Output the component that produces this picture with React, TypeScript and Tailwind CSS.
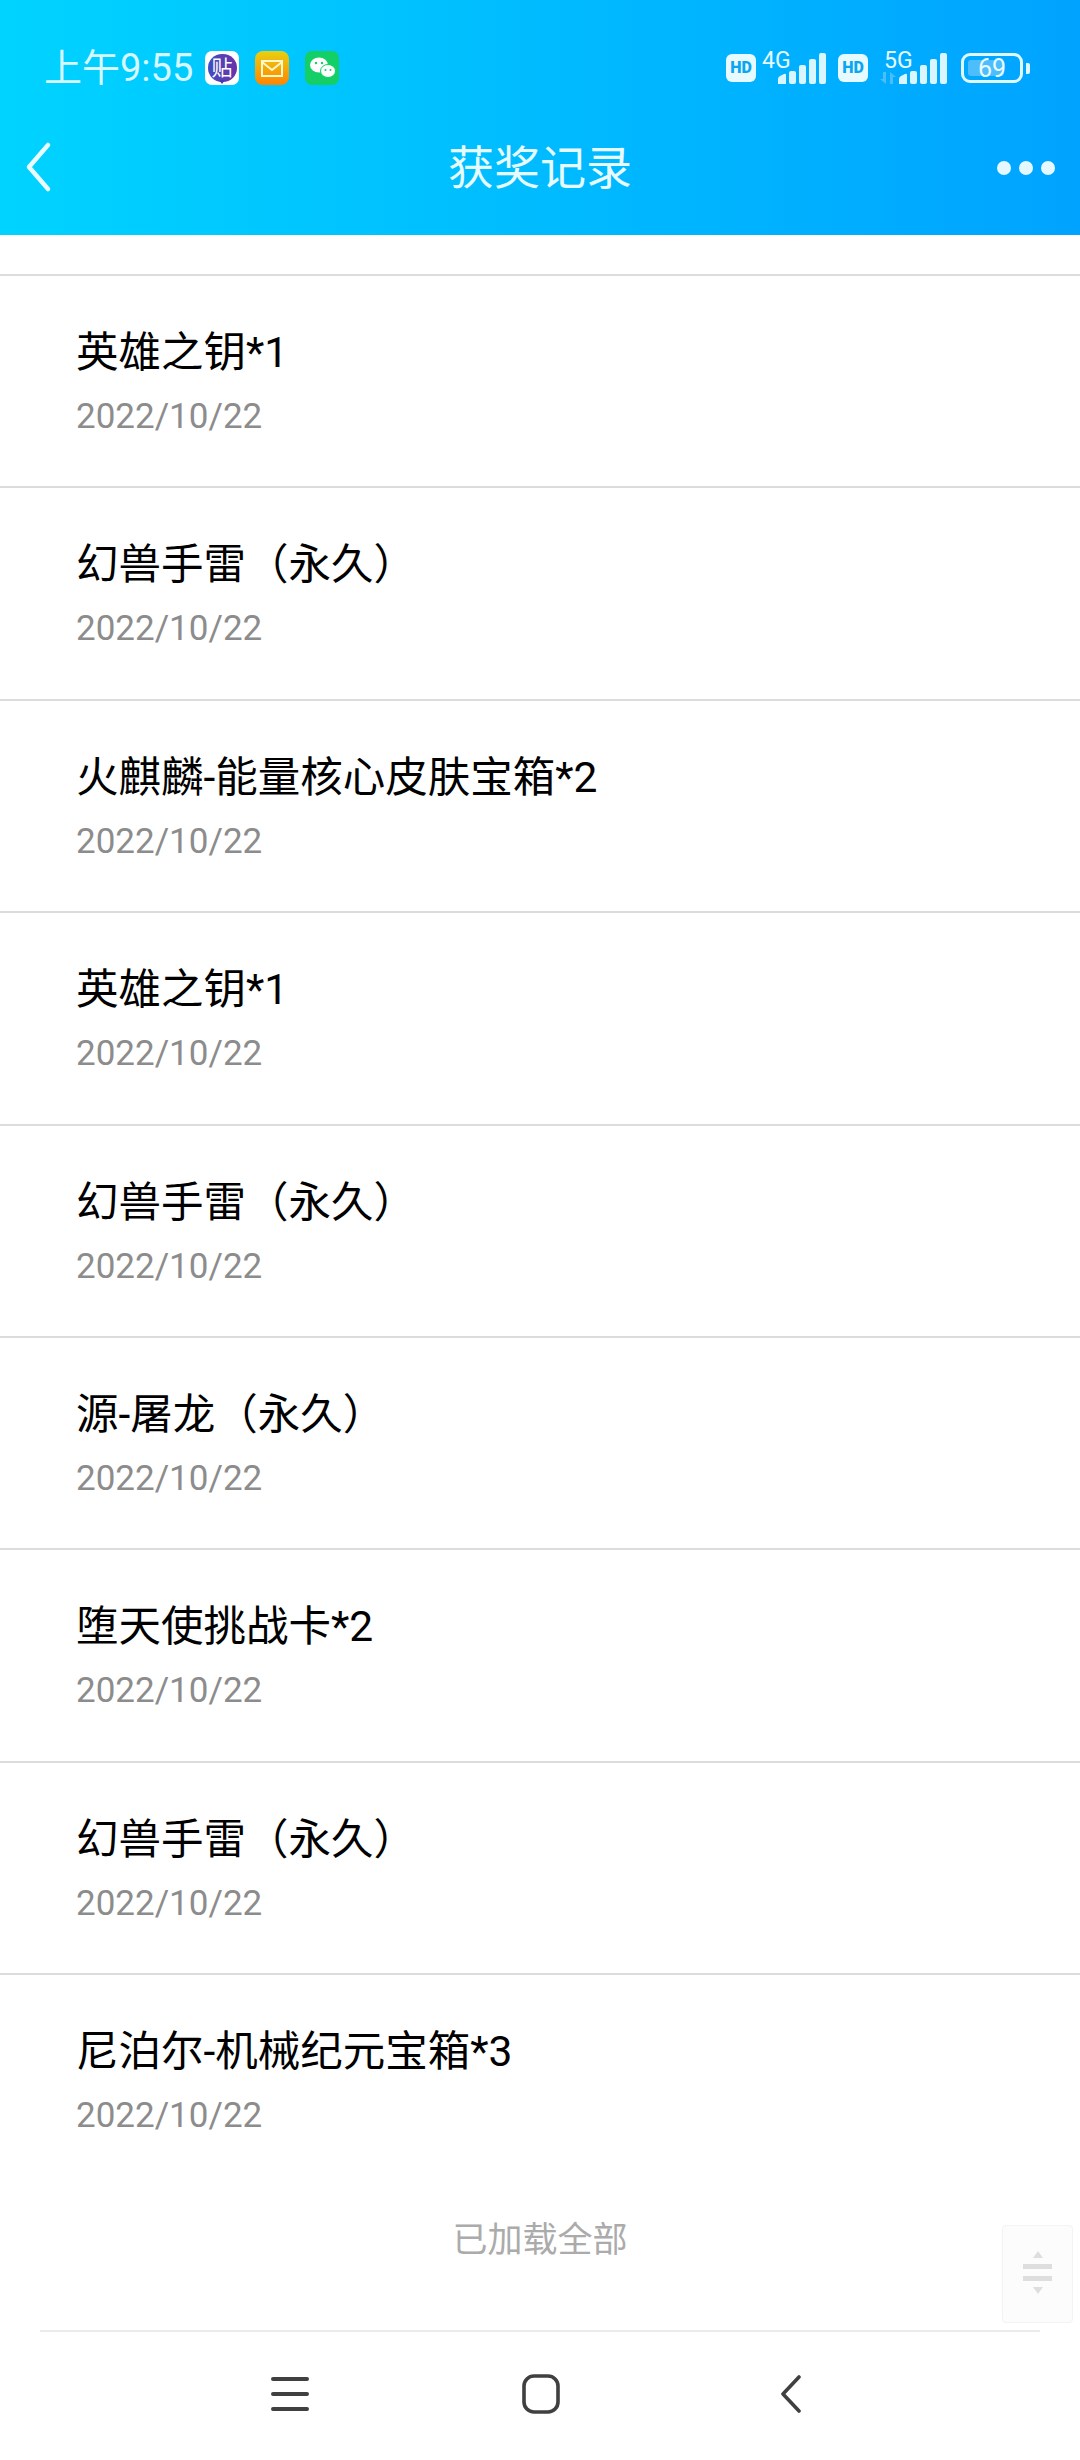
import React from "react";

const records = [
    "英雄之钥*1",
    "幻兽手雷（永久）",
    "火麒麟-能量核心皮肤宝箱*2",
    "英雄之钥*1",
    "幻兽手雷（永久）",
    "源-屠龙（永久）",
    "堕天使挑战卡*2",
    "幻兽手雷（永久）",
    "尼泊尔-机械纪元宝箱*3",
];

const font = "font-['Roboto','Noto_Sans_CJK_SC',sans-serif]";

function Signal() {
    return (
        <svg width="48" height="31" viewBox="0 0 48 31" className="block">
            <g fill="#d9f6ff">
                <path d="M0 26q0-2 2-3l4-2q2-1 2 1v9H0z" />
                <rect x="11" y="18" width="7" height="13" rx="2" />
                <rect x="21" y="12" width="7" height="19" rx="2" />
                <rect x="31" y="6" width="7" height="25" rx="2" />
                <rect x="41" y="0" width="7" height="31" rx="2" />
            </g>
        </svg>
    );
}

function HdBadge() {
    return (
        <div className="w-[30px] h-[28px] rounded-[6px] bg-[#e6faff] flex items-center justify-center text-[16px] leading-none font-black text-[#0aa6f2] font-['Roboto',sans-serif]">
            HD
        </div>
    );
}

function StatusBar() {
    return (
        <div className="h-[136px] pt-[50px] pl-[44px] pr-[50px] flex items-start justify-between">
            <div className="flex items-center h-[36px]">
                <span className="text-[38px] leading-none text-[#d6f7ff] w-[161px] whitespace-nowrap">上午9:55</span>
                <div className="flex gap-[16px]">
                    <div className="relative w-[34px] h-[34px] rounded-[7px] bg-white flex items-center justify-center">
                        <div className="w-[29px] h-[28px] rounded-full bg-gradient-to-r from-[#3a4fc0] to-[#6a2fa8] flex items-center justify-center text-[21px] leading-none text-white">贴</div>
                        <div className="absolute left-[14px] bottom-[1px] w-0 h-0 border-x-[3px] border-x-transparent border-t-[4px] border-t-[#4a35b0]" />
                    </div>
                    <svg width="34" height="34" viewBox="0 0 34 34">
                        <defs>
                            <linearGradient id="mailFill" x1="0" y1="0" x2="0" y2="1">
                                <stop offset="0" stopColor="#e8d010" />
                                <stop offset="1" stopColor="#ff8400" />
                            </linearGradient>
                        </defs>
                        <rect width="34" height="34" rx="8" fill="url(#mailFill)" />
                        <rect x="7" y="10" width="20" height="15" fill="none" stroke="#fff7d0" strokeWidth="2" />
                        <path d="M7 11l10 8 10-8" fill="none" stroke="#fff7d0" strokeWidth="2" />
                    </svg>
                    <svg width="34" height="34" viewBox="0 0 34 34">
                        <rect width="34" height="34" rx="7" fill="#13cf66" />
                        <ellipse cx="14" cy="14" rx="9" ry="7.5" fill="#fff" />
                        <ellipse cx="23" cy="20" rx="7.5" ry="6.5" fill="#fff" stroke="#13cf66" strokeWidth="1" />
                        <circle cx="11" cy="12" r="1.2" fill="#13cf66" />
                        <circle cx="17" cy="12" r="1.2" fill="#13cf66" />
                        <circle cx="20.5" cy="19" r="1" fill="#13cf66" />
                        <circle cx="25.5" cy="19" r="1" fill="#13cf66" />
                    </svg>
                </div>
            </div>
            <div className="flex items-start">
                <div className="mt-[4px]"><HdBadge /></div>
                <div className="relative w-[70px] h-[34px]">
                    <span className="absolute left-[6px] top-[-1px] text-[23px] leading-none text-[#e6faff]">4G</span>
                    <div className="absolute right-0 top-[3px]"><Signal /></div>
                </div>
                <div className="mt-[4px] ml-[12px]"><HdBadge /></div>
                <div className="relative w-[79px] h-[34px]">
                    <span className="absolute left-[16px] top-[-1px] text-[23px] leading-none text-[#e6faff]">5G</span>
                    <svg width="16" height="12" viewBox="0 0 16 12" className="absolute left-[12px] top-[22px]">
                        <path d="M6 0v12L0 7h3V0zM10 12V0l6 5h-3v7z" fill="#4dbdf7" />
                    </svg>
                    <div className="absolute right-0 top-[3px]"><Signal /></div>
                </div>
                <div className="flex items-center ml-[14px] mt-[3px]">
                    <div className="relative w-[62px] h-[30px] rounded-[9px] border-[3px] border-[#dff8ff] overflow-hidden">
                        <div className="absolute left-[4px] top-[4px] bottom-[4px] w-[36px] rounded-[3px] bg-[#4dbdfb]" />
                        <span className="absolute inset-0 flex items-center justify-center text-[25px] leading-none text-[#e8fbff]">69</span>
                    </div>
                    <div className="w-[4px] h-[11px] rounded-r-[2px] bg-[#dff8ff] ml-[3px]" />
                </div>
            </div>
        </div>
    );
}

function TopBar() {
    return (
        <div className="h-[99px] flex items-start justify-between relative">
            <svg width="30" height="52" viewBox="0 0 30 52" className="ml-[24px] mt-[5px]">
                <path d="M24 4 5 26l19 22" fill="none" stroke="#e8fcff" strokeWidth="4.5" strokeLinecap="round" strokeLinejoin="round" />
            </svg>
            <div className="absolute left-0 right-0 top-[4px] text-center text-[46px] leading-[56px] text-[#e6fbff]">获奖记录</div>
            <div className="flex gap-[8px] mr-[25px] mt-[25px]">
                <div className="w-[14px] h-[14px] rounded-full bg-[#e6f8ff]" />
                <div className="w-[14px] h-[14px] rounded-full bg-[#e6f8ff]" />
                <div className="w-[14px] h-[14px] rounded-full bg-[#e6f8ff]" />
            </div>
        </div>
    );
}

function NavBar() {
    return (
        <div className="mt-auto mx-[40px] border-t-2 border-[#ebebeb] h-[130px] flex items-start pl-[231px] pt-[44px]">
            <svg width="38" height="36" viewBox="0 0 38 36" className="block">
                <path d="M2 3h34M2 18h34M2 33h34" fill="none" stroke="#404040" strokeWidth="4" strokeLinecap="round" />
            </svg>
            <svg width="38" height="40" viewBox="0 0 38 40" className="block ml-[213px] mt-[-2px]">
                <rect x="2" y="2" width="34" height="36" rx="10" fill="none" stroke="#404040" strokeWidth="3.6" />
            </svg>
            <svg width="22" height="38" viewBox="0 0 22 38" className="block ml-[220px] mt-[-1px]">
                <path d="M19 2 3 19l16 17" fill="none" stroke="#404040" strokeWidth="3.6" strokeLinecap="round" strokeLinejoin="round" />
            </svg>
        </div>
    );
}

export default function App() {
    return (
        <div className={`relative w-[1080px] h-[2460px] bg-white flex flex-col overflow-hidden ${font}`}>
            <header className="h-[235px] bg-gradient-to-r from-[#00d3ff] to-[#00a3ff]">
                <StatusBar />
                <TopBar />
            </header>

            <div className="mt-[39px] border-t-2 border-[#dcdcdc]">
                {records.map((title, i) => (
                    <div
                        key={i}
                        className={`h-[212.4px] pl-[76px] pt-[47px] ${i < records.length - 1 ? "border-b-2 border-[#dcdcdc]" : ""}`}
                    >
                        <div className="text-[42.5px] leading-[60px] text-black whitespace-nowrap">{title}</div>
                        <div className="mt-[5px] text-[35px] leading-[58px] text-[#8c8c8c]">2022/10/22</div>
                    </div>
                ))}
            </div>

            <div className="mt-[28px] text-center text-[35px] leading-[50px] text-[#ababab]">已加载全部</div>

            <NavBar />

            {/* floating scroll handle */}
            <div className="absolute left-[1002px] top-[2225px] w-[71px] h-[98px] rounded-[4px] bg-[#fcfcfc] border border-[#f3f3f3] flex flex-col items-center pt-[25px]">
                <div className="w-0 h-0 border-x-[5px] border-x-transparent border-b-[7px] border-b-[#dedede]" />
                <div className="w-[29px] h-[5px] bg-[#dedede] mt-[6px]" />
                <div className="w-[29px] h-[5px] bg-[#dedede] mt-[7px]" />
                <div className="w-0 h-0 border-x-[5px] border-x-transparent border-t-[7px] border-t-[#dedede] mt-[6px]" />
            </div>
        </div>
    );
}
